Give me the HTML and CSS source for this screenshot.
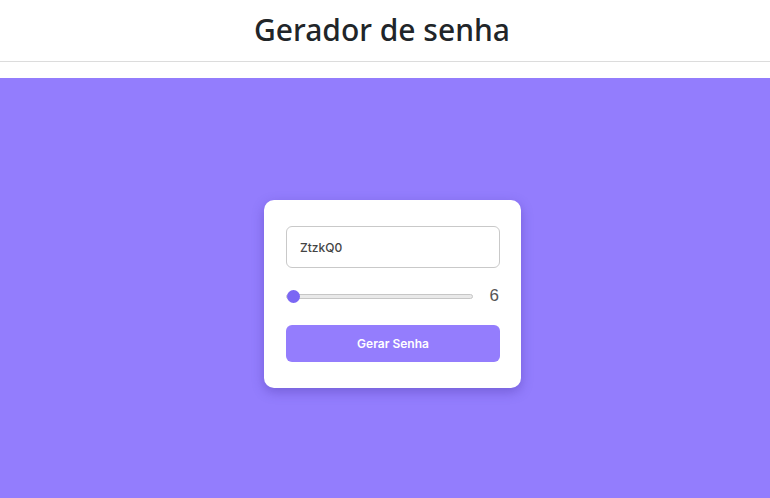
FILE: index.html
```html
<!DOCTYPE html>
<html lang="pt-BR">
<head>
<meta charset="utf-8">
<title>Gerador de senha</title>
<link rel="stylesheet" href="styles.css">
</head>
<body>
<header class="topbar">
  <h1 class="title">Gerador de senha</h1>
</header>
<main class="stage">
  <div class="card">
    <input class="password" type="text" value="ZtzkQ0" readonly>
    <div class="slider-row">
      <input class="range" type="range" min="6" max="30" value="6">
      <span class="size">6</span>
    </div>
    <button class="generate">Gerar Senha</button>
  </div>
</main>
</body>
</html>
```
FILE: styles.css
```css
* { box-sizing: border-box; }
html, body { margin: 0; padding: 0; }
body {
  font-family: "Open Sans", "Noto Sans", sans-serif;
  background: #fff;
  height: 498px;
  overflow: hidden;
}
.topbar {
  height: 62px;
  border-bottom: 1px solid #dcdcdc;
  display: flex;
  align-items: center;
  justify-content: center;
  padding-right: 6px;
}
.title {
  margin: 0;
  font-family: "Noto Sans", "Open Sans", sans-serif;
  font-weight: 500;
  font-size: 30px;
  color: #212529;
  padding-bottom: 2px;
}
.stage {
  margin-top: 16px;
  background: #937dfd;
  height: 420px;
  display: flex;
  justify-content: center;
  padding-top: 122px;
  padding-left: 15px;
}
.card {
  width: 257px;
  height: 188px;
  background: #fff;
  border-radius: 10px;
  box-shadow: 0 4px 12px rgba(60, 40, 150, 0.35);
  padding: 26px 21px 0 22px;
  display: flex;
  flex-direction: column;
}
.password {
  width: 214px;
  height: 42px;
  border: 1px solid #c9c9c9;
  border-radius: 6px;
  padding: 0 13px;
  font-family: "Inter", "Noto Sans", sans-serif;
  font-weight: 500;
  font-size: 12px;
  color: #444;
  outline: none;
}
.slider-row {
  display: flex;
  align-items: center;
  height: 20px;
  margin-top: 18px;
  width: 214px;
}
.range {
  -webkit-appearance: none;
  appearance: none;
  width: 187px;
  height: 5px;
  margin: 0;
  background: #e9e9e9;
  border: 1px solid #c6c6c6;
  border-radius: 3px;
  outline: none;
}
.range::-webkit-slider-thumb {
  -webkit-appearance: none;
  appearance: none;
  width: 13px;
  height: 13px;
  border-radius: 50%;
  background: #7b67f4;
  border: none;
}
.size {
  margin-left: auto;
  font-family: "Liberation Sans", "Noto Sans", sans-serif;
  font-size: 17px;
  color: #555;
  padding-right: 1px;
}
.generate {
  margin-top: 19px;
  width: 214px;
  height: 37px;
  border: none;
  border-radius: 6px;
  background: #947dfd;
  color: #fff;
  font-family: "Inter", "Noto Sans", sans-serif;
  font-weight: 600;
  font-size: 12px;
  cursor: pointer;
}
```
